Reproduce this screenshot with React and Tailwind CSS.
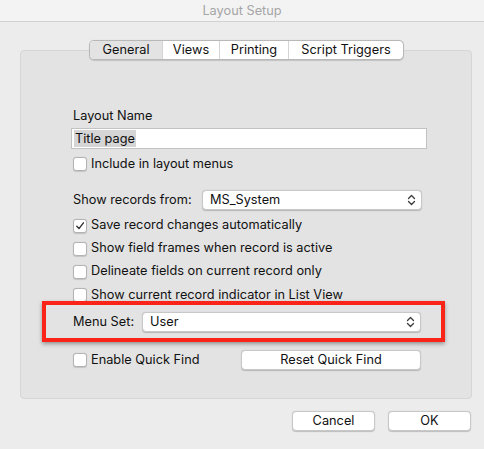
import React from 'react'

const font = { fontFamily: 'Inter, "Liberation Sans", sans-serif' }

function Checkbox({ checked }) {
  return (
    <span className="flex h-[14px] w-[14px] shrink-0 items-center justify-center rounded-[3px] border border-[#b3b3b3] bg-white shadow-[0_0.5px_1px_rgba(0,0,0,0.15)]">
      {checked && (
        <svg width="10" height="10" viewBox="0 0 10 10" fill="none">
          <path d="M1.8 5.3 L4 7.6 L8.4 1.8" stroke="#333" strokeWidth="1.4" strokeLinecap="round" strokeLinejoin="round" />
        </svg>
      )}
    </span>
  )
}

function CheckRow({ checked, label, className = '' }) {
  return (
    <div className={`flex items-center gap-[4px] ${className}`}>
      <Checkbox checked={checked} />
      <span className="leading-none">{label}</span>
    </div>
  )
}

function Chevrons() {
  return (
    <svg width="9" height="12" viewBox="0 0 9 12" fill="none">
      <path d="M1.5 4.5 L4.5 1.5 L7.5 4.5" stroke="#3a3a3a" strokeWidth="1.3" strokeLinecap="round" strokeLinejoin="round" />
      <path d="M1.5 7.5 L4.5 10.5 L7.5 7.5" stroke="#3a3a3a" strokeWidth="1.3" strokeLinecap="round" strokeLinejoin="round" />
    </svg>
  )
}

function Select({ value, className = '' }) {
  return (
    <div className={`flex h-[20px] items-center justify-between rounded-[4px] border border-[#c8c8c8] bg-white pl-[7px] pr-[5px] shadow-[0_0.5px_1px_rgba(0,0,0,0.2)] ${className}`}>
      <span className="leading-none">{value}</span>
      <Chevrons />
    </div>
  )
}

function Button({ children, className = '' }) {
  return (
    <div className={`flex h-[20px] items-center justify-center rounded-[4px] border border-[#c8c8c8] bg-white leading-none shadow-[0_0.5px_1px_rgba(0,0,0,0.2)] ${className}`}>
      {children}
    </div>
  )
}

const tabs = [
  { name: 'General', w: 'w-[72px]', active: true },
  { name: 'Views', w: 'w-[57px]' },
  { name: 'Printing', w: 'w-[69px]' },
  { name: 'Script Triggers', w: 'w-[115px]' },
]

export default function App() {
  return (
    <div className="relative h-[449px] w-[484px] overflow-hidden bg-[#ececec] text-[12.75px] text-[#111]" style={font}>
      <div className="flex h-[22px] items-center justify-center border-b border-[#d2d2d2] bg-[#f3f3f3] text-[#a6a6a6]">
        Layout Setup
      </div>

      <div className="relative z-10 mt-[18px] flex justify-center pl-[9px]">
        <div className="flex h-[20px] overflow-hidden rounded-[5px] border border-[#b8b8b8] bg-white shadow-[0_0.5px_1px_rgba(0,0,0,0.15)]">
          {tabs.map((t, i) => (
            <div
              key={t.name}
              className={`flex items-center justify-center leading-none ${t.w} ${i > 0 ? 'border-l border-[#d4d4d4]' : ''} ${t.active ? 'bg-[#e3e3e3]' : ''}`}
            >
              {t.name}
            </div>
          ))}
        </div>
      </div>

      <div className="ml-[20px] mt-[-10px] h-[349px] w-[452px] rounded-[4px] border border-[#d6d6d6] bg-[#e3e3e3] pl-[52px] pt-[57px]">
        <div className="h-[16px] leading-[16px]">Layout Name</div>
        <div className="ml-[-2px] mt-[4px] flex h-[21px] w-[356px] items-center border border-[#c2c2c2] bg-white pl-[2px]">
          <span className="bg-[#d5d5d5] px-[1px] leading-[17px]">Title page</span>
        </div>
        <CheckRow label="Include in layout menus" className="mt-[8px]" />

        <div className="mt-[19px] flex items-center">
          <span className="w-[129px] leading-none">Show records from:</span>
          <Select value="MS_System" className="w-[220px]" />
        </div>

        <div className="mt-[4px]">
          <CheckRow checked label="Save record changes automatically" className="h-[23px]" />
          <CheckRow label="Show field frames when record is active" className="h-[23px]" />
          <CheckRow label="Delineate fields on current record only" className="h-[23px]" />
          <CheckRow label="Show current record indicator in List View" className="h-[24px]" />
        </div>

        <div className="mt-[5px] flex items-center">
          <span className="w-[69px] leading-none">Menu Set:</span>
          <Select value="User" className="w-[279px]" />
        </div>

        <div className="mt-[18px] flex items-center">
          <CheckRow label="Enable Quick Find" className="w-[168px]" />
          <Button className="w-[180px]">Reset Quick Find</Button>
        </div>
      </div>

      <div className="mt-[12px] flex justify-end gap-[13px] pr-[13px]">
        <Button className="w-[83px]">Cancel</Button>
        <Button className="w-[83px]">OK</Button>
      </div>

      <div className="pointer-events-none absolute left-[42px] top-[301px] h-[41px] w-[403px] border-4 border-[#fb2419] shadow-[0_2px_4px_rgba(0,0,0,0.35)]" />
    </div>
  )
}
